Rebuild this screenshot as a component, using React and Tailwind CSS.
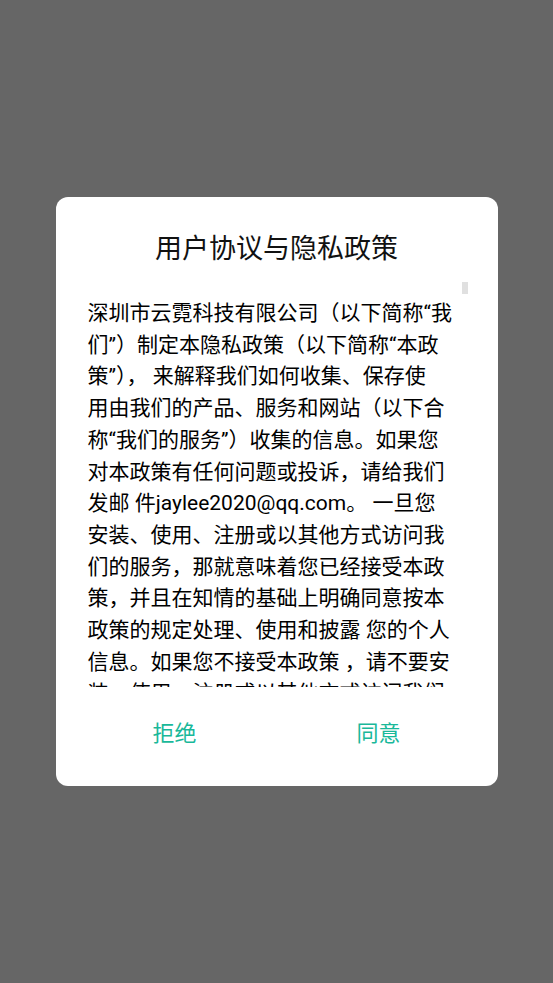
import React from 'react';

const lines = [
  '深圳市云霓科技有限公司（以下简称“我',
  '们”）制定本隐私政策（以下简称“本政',
  '策”）， 来解释我们如何收集、保存使',
  '用由我们的产品、服务和网站（以下合',
  '称“我们的服务”）收集的信息。如果您',
  '对本政策有任何问题或投诉，请给我们',
  '发邮 件jaylee2020@qq.com。 一旦您',
  '安装、使用、注册或以其他方式访问我',
  '们的服务，那就意味着您已经接受本政',
  '策，并且在知情的基础上明确同意按本',
  '政策的规定处理、使用和披露 您的个人',
  '信息。如果您不接受本政策 ，请不要安',
  '装、使用、注册或以其他方式访问我们',
  '的服务。',
];

export default function App() {
  return (
    <div
      className="flex h-[983px] w-full items-center justify-center bg-[#666666]"
      style={{ fontFamily: 'Roboto, "Noto Sans CJK SC", sans-serif' }}
    >
      <div className="flex h-[589px] w-[442px] flex-col rounded-[12px] bg-white">
        <h1 className="pt-[33px] text-center text-[27px] font-normal leading-[38px] text-[#111]">
          用户协议与隐私政策
        </h1>

        {/* policy body, clipped like a scroll view */}
        <div className="relative mt-[14px] h-[405px] overflow-hidden pl-[32px] pt-[16px]">
          <div className="absolute right-[30px] top-0 h-[12px] w-[6px] bg-[#e0e0e0]" />
          {lines.map((l, i) => (
            <div key={i} className="whitespace-pre text-[21px] leading-[31.7px] text-black">
              {l}
            </div>
          ))}
        </div>

        <div className="flex px-[17px] pt-[32px]">
          <button className="flex-1 text-center text-[22px] leading-[30px] text-[#19b89a]">拒绝</button>
          <button className="flex-1 text-center text-[22px] leading-[30px] text-[#19b89a]">同意</button>
        </div>
      </div>
    </div>
  );
}
